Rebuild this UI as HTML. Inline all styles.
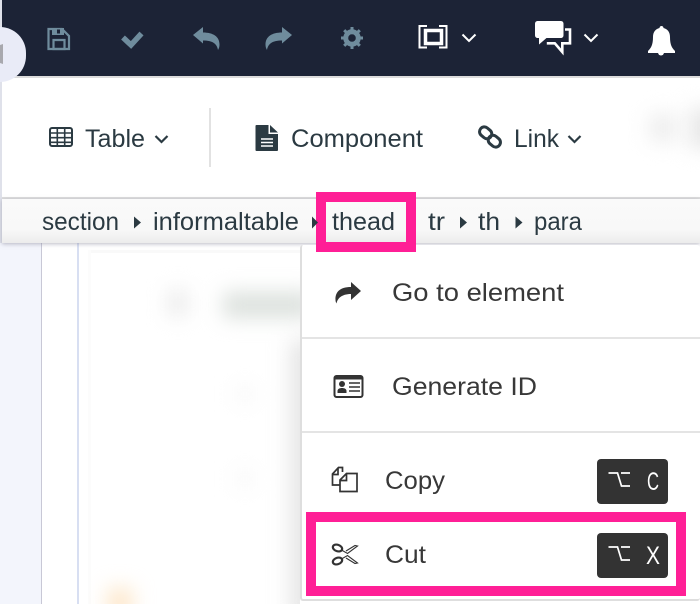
<!DOCTYPE html>
<html><head><meta charset="utf-8"><style>
html,body{margin:0;padding:0;background:#fff}
#p{position:relative;width:700px;height:604px;overflow:hidden;background:#fff}
.a{position:absolute}
.b{position:absolute;filter:blur(10px)}
svg{position:absolute;left:0;top:0}
text{font-family:"Liberation Sans",sans-serif;font-size:25px}
</style></head><body><div id="p">
<div class="a" style="left:0;top:243px;width:41px;height:361px;background:#f3f5fc"></div>
<div class="a" style="left:41px;top:243px;width:1px;height:361px;background:#c8c8d6"></div>
<div class="a" style="left:77px;top:243px;width:2px;height:361px;background:#d8dff2"></div>
<div class="a" style="left:88px;top:250px;width:212px;height:354px;background:#fff;overflow:hidden">
<div class="a" style="left:0;top:0;width:212px;height:3px;background:#f9f9f9"></div>
<div class="a" style="left:0;top:0;width:3px;height:354px;background:#fcfcfc"></div>
<div class="b" style="left:80px;top:40px;width:20px;height:26px;background:#ebebeb"></div>
<div class="b" style="left:135px;top:42px;width:90px;height:26px;background:#dce1dd"></div>
<div class="b" style="left:202px;top:90px;width:30px;height:280px;background:#e6e6e6"></div>
<div class="b" style="left:148px;top:135px;width:18px;height:18px;background:#f8f8f8"></div>
<div class="b" style="left:148px;top:220px;width:18px;height:18px;background:#f8f8f8"></div>
<div class="b" style="left:20px;top:338px;width:24px;height:30px;background:#fde6c8"></div>
</div>
<div class="a" style="left:0;top:0;width:2px;height:243px;background:#dfe1ea"></div>
<div class="a" style="left:2px;top:0;width:698px;height:76px;background:#1c2336"></div>
<div class="a" style="left:2px;top:76px;width:698px;height:2px;background:#dcdcdc"></div>
<div class="a" style="left:2px;top:78px;width:698px;height:120px;background:#fff;overflow:hidden">
<div class="b" style="left:648px;top:36px;width:26px;height:28px;background:#ededed"></div>
<div class="b" style="left:688px;top:30px;width:30px;height:40px;background:#e6e6e6"></div>
</div>
<div class="a" style="left:209px;top:108px;width:2px;height:59px;background:#e2e2e2"></div>
<div class="a" style="left:2px;top:197px;width:698px;height:2px;background:#dedede"></div>
<div class="a" style="left:2px;top:199px;width:698px;height:44px;background:linear-gradient(#fafafa 0,#f8f8f8 70%,#ececec 100%);box-shadow:0 1px 4px rgba(130,130,150,.55)"></div>
<div class="a" style="left:0;top:27px;width:26px;height:55px;border-radius:0 27px 27px 0;background:#e9ebf7"></div>
<div class="a" style="left:300px;top:245px;width:400px;height:356px;background:#fff;border-left:2px solid #dedede;border-bottom:2px solid #dedede;border-radius:3px;box-sizing:border-box"></div>
<div class="a" style="left:302px;top:337px;width:398px;height:2px;background:#e4e4e4"></div>
<div class="a" style="left:302px;top:431px;width:398px;height:2px;background:#e4e4e4"></div>
<div class="a" style="left:597px;top:459px;width:71px;height:45px;background:#333;border-radius:4px"></div>
<div class="a" style="left:597px;top:533px;width:71px;height:45px;background:#333;border-radius:4px"></div>
<div class="a" style="left:316px;top:192px;width:100px;height:60px;border:10px solid #ff1f96;box-sizing:border-box"></div>
<div class="a" style="left:306px;top:512px;width:380px;height:84px;border:10px solid #ff1f96;box-sizing:border-box"></div>
<svg width="700" height="604" viewBox="0 0 700 604">
<path d="M0 45l3-1v20l-3-1z" fill="#a8a8ae"/>
<!-- save -->
<g fill="none" stroke="#6f8c9d" stroke-width="2.200"><path d="M48.500 29h13.500l7 7v13h-20.500z"/><path d="M53.500 40h11v9h-11z"/></g><path d="M52 28h12v7H52z" fill="#6f8c9d"/><path d="M57 29.500h3v4h-3z" fill="#1c2336"/>
<!-- check -->
<path d="M123 37.500l8 7.500 10.500-11.500" fill="none" stroke="#6f8c9d" stroke-width="5.500"/>
<!-- undo -->
<path d="M193 35l10-8v5.500c10 0 16.500 4 16.500 12 0 2-.5 4-1.500 5.500-1-6-5-9.500-15-9.500v3z" fill="#6f8c9d"/>
<!-- redo -->
<path d="M292 35l-10-8v5.500c-10 0-16.500 4-16.500 12 0 2 .5 4 1.500 5.500 1-6 5-9.500 15-9.500v3z" fill="#6f8c9d"/>
<!-- gear -->
<circle cx="352" cy="38" r="6.500" fill="none" stroke="#6f8c9d" stroke-width="4.500"/><path d="M352 27v22M341 38h22M344.200 30.200l15.600 15.600M359.800 30.200l-15.600 15.600" stroke="#6f8c9d" stroke-width="3"/><circle cx="352" cy="38" r="3.800" fill="#1c2336"/>
<!-- fullscreen -->
<path d="M427 26h-7.500v21.500h7.500M439 26h7.500v21.500H439" fill="none" stroke="#fff" stroke-width="2"/><path d="M425.500 30.500h16v13h-16z" fill="none" stroke="#fff" stroke-width="3.500"/>
<path d="M462.500 34.500l6.500 6.500 6.500-6.500" fill="none" stroke="#fff" stroke-width="2"/>
<!-- chat -->
<path d="M538 21h22.500c2 0 3 1 3 3v11c0 2-1 3-3 3h-14l-7.500 6.500v-6.500h-1c-2 0-3-1-3-3V24c0-2 1-3 3-3z" fill="#fff"/>
<path d="M565 29.500h5v13.800h-7.700v8.700l-7.500-8.700h-8" fill="none" stroke="#fff" stroke-width="2.600"/>
<path d="M584.500 34.500l6.500 6.500 6.500-6.500" fill="none" stroke="#fff" stroke-width="2"/>
<!-- bell -->
<path d="M661.500 26c1 0 2 .7 2 2 4 1 6.500 4 6.500 9 0 8 2 11 5 14v2h-27v-2c3-3 5-6 5-14 0-5 2.500-8 6.500-9 0-1.300 1-2 2-2z" fill="#fff"/><circle cx="661" cy="52.500" r="3" fill="#fff"/>
<!-- table -->
<g fill="none" stroke="#2b3a42"><rect x="50" y="128" width="22" height="18" rx="2" stroke-width="2"/><path d="M50 133h22M50 137.700h22M50 142.300h22M57.300 129v16M64.700 129v16" stroke-width="1.600"/></g>
<path d="M155.500 136l6 6 6-6" fill="none" stroke="#2b3a42" stroke-width="2.200"/>
<!-- file -->
<path d="M256.500 125h12v9h9.500v16c0 .6-.4 1-1 1h-20.500c-.6 0-1-.4-1-1v-24c0-.6.400-1 1-1z" fill="#2b3a42"/><path d="M270 125l8 7.500h-8z" fill="#2b3a42"/><path d="M261 139h12M261 142.500h12M261 146h12" stroke="#fff" stroke-width="1.500"/>
<!-- link -->
<g fill="none" stroke="#2b3a42" stroke-width="3"><rect x="479" y="128" width="13" height="9.500" rx="4.700" transform="rotate(40 485.500 133)"/><rect x="488" y="136.500" width="13" height="9.500" rx="4.700" transform="rotate(40 494.500 141)"/></g>
<path d="M568.500 136l6 6 6-6" fill="none" stroke="#2b3a42" stroke-width="2.200"/>
<!-- crumbs -->
<g fill="#2b3a42"><path d="M134 216.500l7 6-7 6zM312 216.500l6 6-6 6zM460 216.500l7 6-7 6zM515.500 216.500l7 6-7 6z"/></g>
<!-- go to -->
<path d="M361 291l-10-9v5c-11 0-16 5-15.500 13 0 1.500 .5 2.500 1 3.500 1-5 5-9.500 14.500-9.500v6z" fill="#333"/>
<!-- id card -->
<rect x="334.500" y="376" width="28" height="21" rx="2" fill="none" stroke="#333" stroke-width="2"/><path d="M335 376h27v3.500h-27z" fill="#333"/><circle cx="342" cy="384" r="3" fill="#333"/><path d="M337.500 393v-2c0-2 2-3 4.500-3s4.500 1 4.500 3v2z" fill="#333"/><path d="M349 383h11M349 387h11M349 391h11" stroke="#333" stroke-width="1.500"/>
<!-- copy -->
<g fill="none" stroke="#333" stroke-width="1.700"><path d="M342.500 472v-4.500h-4l-6 6.500v11h7"/><path d="M346.500 473.500h10.500v18h-17v-11.500z"/><path d="M346.500 473.500v7h-6.500M338 468.500v6h-5.500"/></g>
<!-- scissors -->
<g fill="none" stroke="#333"><ellipse cx="337.500" cy="548" rx="4.800" ry="3.200" stroke-width="2.200" transform="rotate(20 337.500 548)"/><ellipse cx="337.500" cy="561" rx="4.800" ry="3.200" stroke-width="2.200" transform="rotate(-20 337.500 561)"/><path d="M341.500 550l6 3.500 10-7.500-2.500-.5-9 5.500M341.500 559l6-3.500 10 7.500-2.500 .5-9-5.500" stroke-width="1.100"/></g>
<!-- opt keys -->
<path d="M608.500 473h9l4 13h8.500M621 473h9M608.500 547h9l4 13h8.500M621 547h9" fill="none" stroke="#fff" stroke-width="1.700"/>
<g fill="#2b3a42">
<text x="85" y="147" textLength="60" lengthAdjust="spacingAndGlyphs">Table</text>
<text x="291" y="147" textLength="132" lengthAdjust="spacingAndGlyphs">Component</text>
<text x="514" y="147" textLength="45" lengthAdjust="spacingAndGlyphs">Link</text>
<text x="42" y="230" textLength="77" lengthAdjust="spacingAndGlyphs">section</text>
<text x="153" y="230" textLength="146" lengthAdjust="spacingAndGlyphs">informaltable</text>
<text x="332" y="230" textLength="63" lengthAdjust="spacingAndGlyphs">thead</text>
<text x="428" y="230" textLength="17" lengthAdjust="spacingAndGlyphs">tr</text>
<text x="478" y="230" textLength="22" lengthAdjust="spacingAndGlyphs">th</text>
<text x="534" y="230" textLength="48" lengthAdjust="spacingAndGlyphs">para</text>
</g>
<g fill="#383838">
<text x="392" y="301" textLength="172" lengthAdjust="spacingAndGlyphs">Go to element</text>
<text x="392" y="395" textLength="145" lengthAdjust="spacingAndGlyphs">Generate ID</text>
<text x="385" y="489" textLength="60" lengthAdjust="spacingAndGlyphs">Copy</text>
<text x="385" y="563" textLength="41" lengthAdjust="spacingAndGlyphs">Cut</text>
</g>
<g fill="#fff">
<text x="647" y="490" textLength="12" lengthAdjust="spacingAndGlyphs">C</text>
<text x="646" y="564" textLength="14" lengthAdjust="spacingAndGlyphs">X</text>
</g>
</svg>
</div></body></html>
